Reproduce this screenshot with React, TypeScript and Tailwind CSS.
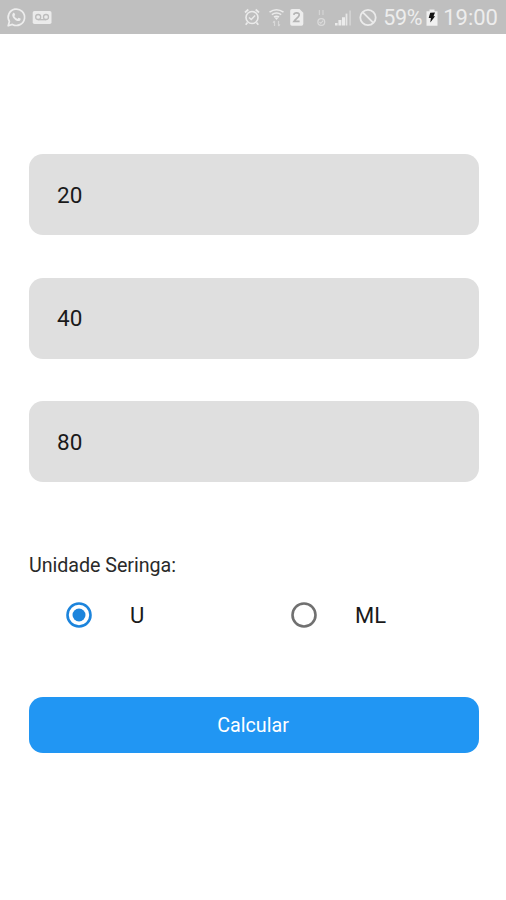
import { useState } from "react";

type Unit = "U" | "ML";

const DOSE_FIELDS = ["20", "40", "80"];
const UNITS: Unit[] = ["U", "ML"];

function NotificationIcons() {
    return (
        <svg width="54" height="34" viewBox="0 0 54 34" fill="none" stroke="#ededed">
            {/* WhatsApp */}
            <path d="M8.2 25.8l1.2-4.3a8.2 8.2 0 1 1 3 2.9z" strokeWidth="1.7" strokeLinejoin="round" />
            <path
                d="M13 13.2c.5-.6 1.2-.5 1.5.1l.7 1.6-.9 1.2c.7 1.4 1.7 2.2 3.1 2.8l1.1-1.2 1.9.9c.5.3.3 1.3-.3 1.8-1.5 1.2-3.6.4-5.3-1-1.6-1.4-3.6-4.2-1.8-6.2z"
                fill="#ededed"
                stroke="none"
            />
            {/* gravador */}
            <rect x="32.7" y="11" width="18.8" height="13" rx="1.8" fill="#ebebeb" stroke="none" />
            <g stroke="#bcbcbc" strokeWidth="1.3">
                <circle cx="38.2" cy="17" r="2.5" />
                <circle cx="46" cy="17" r="2.5" />
                <path d="M38.2 19.7h7.8" />
            </g>
        </svg>
    );
}

function SystemIcons() {
    return (
        <svg width="136" height="34" viewBox="242 0 136 34" fill="none" stroke="#ebebeb">
            {/* alarme */}
            <circle cx="252" cy="17.5" r="6" strokeWidth="1.6" />
            <path d="M249 17.5l2.3 2.1 3.8-4" strokeWidth="1.4" />
            <path d="M245 12.5l3.3-3M259 12.5l-3.3-3M247.5 22.5l-1.8 2.3M256.5 22.5l1.8 2.3" strokeWidth="1.7" />
            {/* wi-fi */}
            <g strokeWidth="1.6">
                <path d="M269.5 12.2q7-5 14 0" />
                <path d="M271.8 14.6q4.7-3.2 9.4 0" />
                <path d="M274 17q2.5-1.6 5 0" />
            </g>
            <path d="M276.5 20l-2-2.4h4z" fill="#ebebeb" stroke="none" />
            <path d="M274.5 26v-5m-1.5 1.6l1.5-1.6M278.5 21v5m1.5-1.6l-1.5 1.6" stroke="#d8d8d8" strokeWidth="1.2" />
            {/* chip 2 */}
            <path d="M292 9h7.5l3.8 3.8V24a1.8 1.8 0 0 1-1.8 1.8H292a1.8 1.8 0 0 1-1.8-1.8V10.8A1.8 1.8 0 0 1 292 9z" fill="#ededed" stroke="none" />
            <path d="M293.8 14.8c.4-2.8 5.8-2.6 5.4.4-.2 1.8-3.4 3.8-5.2 6.2h5.6" stroke="#b4b4b4" strokeWidth="1.7" />
            {/* dados */}
            <path d="M319.4 10v5M323 10v5" stroke="#d4d4d4" strokeWidth="1.2" />
            <circle cx="321.3" cy="22" r="3.4" stroke="#dadada" strokeWidth="1.3" />
            <path d="M319.5 22l1.3 1.3 2.4-2.6" stroke="#dadada" strokeWidth="1.1" />
            {/* sinal */}
            <path d="M335 25.5v-2.5h2.6v2.5zM338.4 25.5v-5.5h3v5.5zM342 25.5v-8.3h3v8.3z" fill="#ebebeb" stroke="none" />
            <path d="M345.6 25.5V13.6h1.8v11.9z" fill="#e6e6e6" stroke="none" />
            <path d="M349.2 25.5V10.6h1.8v14.9z" fill="#d2d2d2" stroke="none" />
            {/* bloqueado */}
            <circle cx="368" cy="17.5" r="7.7" strokeWidth="1.8" />
            <path d="M362.6 12.1l10.8 10.8" strokeWidth="1.8" />
        </svg>
    );
}

function BatteryIcon() {
    return (
        <svg width="12" height="34" viewBox="0 0 12 34">
            <path d="M3.5 9.5h5v1.7H11.5V25.7H.5V11.2h3z" fill="#f0f0f0" />
            <path d="M4.2 12.7l4.8-.3-1.5 3.8h1.6l-4.8 6.4.6-4.6H2.7z" fill="#151515" />
        </svg>
    );
}

function StatusBar() {
    return (
        <header className="flex h-[34px] items-center bg-[#bfbfbf] text-[22px] leading-[34px] text-[#ededed]">
            <NotificationIcons />
            <div className="ml-auto flex items-center pr-[8px]">
                <SystemIcons />
                <span className="ml-[5px] w-[39px] whitespace-nowrap pt-0.5 text-[21.5px] tracking-[-0.3px]">59%</span>
                <span className="ml-[4px]">
                    <BatteryIcon />
                </span>
                <span className="ml-[5px] whitespace-nowrap pt-0.5">19:00</span>
            </div>
        </header>
    );
}

interface UnitOptionProps {
    unit: Unit;
    checked: boolean;
    onSelect: () => void;
}

function UnitOption({ unit, checked, onSelect }: UnitOptionProps) {
    return (
        <button
            type="button"
            role="radio"
            aria-checked={checked}
            onClick={onSelect}
            className="flex h-[34px] items-center pl-[36px] text-left text-[22px] text-[#1a1a1a]"
        >
            <svg width="28" height="28" viewBox="0 0 28 28">
                <circle
                    cx="14"
                    cy="14"
                    r="11.5"
                    fill="none"
                    stroke={checked ? "#1c84dc" : "#707070"}
                    strokeWidth="2.6"
                />
                {checked && <circle cx="14" cy="14" r="6.5" fill="#1c84dc" />}
            </svg>
            <span className="ml-[37px]">{unit}</span>
        </button>
    );
}

export default function App() {
    const [values, setValues] = useState(DOSE_FIELDS);
    const [unit, setUnit] = useState<Unit>("U");

    return (
        <div className="h-[900px] w-[506px] overflow-hidden bg-white font-[Roboto,sans-serif]">
            <StatusBar />
            <main className="flex flex-col pt-[120px] pr-[27px] pl-[29px]">
                <div className="flex flex-col gap-[42.5px]">
                    {values.map((value, i) => (
                        <input
                            key={i}
                            value={value}
                            onChange={(e) => setValues(values.map((v, j) => (j === i ? e.target.value : v)))}
                            className="h-[81px] w-full rounded-[14px] bg-[#dfdfdf] px-[28px] text-[22.5px] text-[#1a1a1a] outline-none"
                        />
                    ))}
                </div>

                <p className="mt-[71px] text-[19.7px] leading-[26px] tracking-[-0.05px] text-[#2a2a2a]">
                    Unidade Seringa:
                </p>
                <div role="radiogroup" className="mt-[19px] grid grid-cols-2">
                    {UNITS.map((u) => (
                        <UnitOption key={u} unit={u} checked={u === unit} onSelect={() => setUnit(u)} />
                    ))}
                </div>

                <button
                    type="button"
                    className="mt-[65px] h-[56px] rounded-[14px] bg-[#2196f3] pt-0.5 pr-0.5 text-[19.7px] text-white"
                >
                    Calcular
                </button>
            </main>
        </div>
    );
}
